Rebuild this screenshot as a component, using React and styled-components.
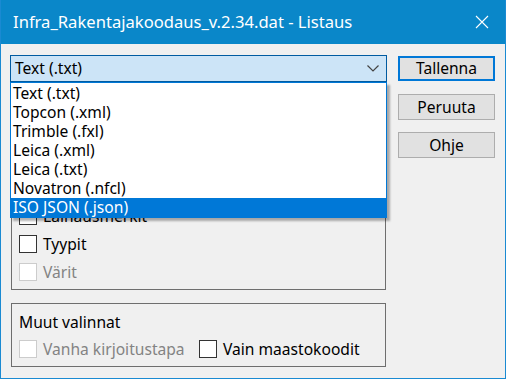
import React from "react";
import styled, { createGlobalStyle } from "styled-components";

const Global = createGlobalStyle`
  html, body { margin: 0; padding: 0; background: #f0f0f0; }
  * { box-sizing: border-box; }
  body { font-family: "Noto Sans", "Open Sans", sans-serif; }
`;

const Window = styled.div`
  width: 506px;
  height: 379px;
  border: 1px solid #1a8ad2;
  border-top: none;
  display: flex;
  flex-direction: column;
  background: #f0f0f0;
`;

const TitleBar = styled.div`
  height: 44px;
  background: #0a87c9;
  display: flex;
  align-items: center;
  justify-content: space-between;
  padding: 0 12px 0 12px;
  color: #fff;
  font-size: 16.6px;
  flex: none;
`;

const Title = styled.span`
  padding-bottom: 2px;
  white-space: nowrap;
`;

const Close = styled.svg`
  width: 14px;
  height: 14px;
  margin-right: 4px;
`;

const Client = styled.div`
  flex: 1;
  display: flex;
  padding: 11px 9px 0 9px;
  font-size: 15.6px;
  color: #000;
`;

const LeftCol = styled.div`
  width: 377px;
  display: flex;
  flex-direction: column;
`;

const RightCol = styled.div`
  margin-left: 11px;
  margin-top: 1px;
  width: 97px;
  display: flex;
  flex-direction: column;
  gap: 12px;
`;

const ComboWrap = styled.div`
  position: relative;
  height: 27px;
`;

const Combo = styled.div`
  height: 27px;
  border: 1px solid #005ba1;
  background: #cce4f7;
  display: flex;
  align-items: center;
  justify-content: space-between;
  padding: 0 7px 1px 4px;
`;

const Chevron = styled.svg`
  width: 12px;
  height: 7px;
`;

const DropList = styled.ul`
  position: absolute;
  top: 27px;
  left: 0;
  width: 377px;
  margin: 0;
  padding: 1px 0 0 0;
  list-style: none;
  background: #fff;
  border: 1px solid #0078d7;
  box-shadow: 3px 3px 2px rgba(0, 0, 0, 0.3);
  z-index: 5;
`;

const Item = styled.li`
  height: 19px;
  line-height: 19px;
  padding-left: 2px;
  padding-bottom: 1px;
  background: ${(p) => (p.$active ? "#0078d7" : "transparent")};
  color: ${(p) => (p.$active ? "#fff" : "#000")};
  white-space: nowrap;
`;

const Group = styled.div`
  margin: ${(p) => p.$top}px 1px 0 1px;
  border: 1px solid #6e6e6e;
  padding: ${(p) => p.$padTop}px 7px 8px 7px;
  display: flex;
  flex-direction: column;
  gap: ${(p) => p.$gap}px;
`;

const GroupLabel = styled.div`
  height: 20px;
  line-height: 20px;
`;

const CheckRow = styled.div`
  display: flex;
`;

const Check = styled.label`
  display: flex;
  align-items: center;
  gap: 6px;
  height: 18px;
  width: ${(p) => (p.$width ? `${p.$width}px` : "auto")};
  color: ${(p) => (p.$disabled ? "#838383" : "#000")};
  white-space: nowrap;
`;

const Box = styled.span`
  width: 18px;
  height: 18px;
  flex: none;
  border: 1px solid ${(p) => (p.$disabled ? "#cccccc" : "#333333")};
  background: #fff;
`;

const Button = styled.div`
  height: ${(p) => (p.$default ? 25 : 26)}px;
  margin-bottom: ${(p) => (p.$default ? 1 : 0)}px;
  background: #e1e1e1;
  border: ${(p) => (p.$default ? "2px solid #0078d7" : "1px solid #adadad")};
  display: flex;
  align-items: center;
  justify-content: center;
  padding-bottom: 1px;
`;

const formats = [
  "Text (.txt)",
  "Topcon (.xml)",
  "Trimble (.fxl)",
  "Leica (.xml)",
  "Leica (.txt)",
  "Novatron (.nfcl)",
  "ISO JSON (.json)",
];

function CheckBox({ label, disabled, width }) {
  return (
    <Check $disabled={disabled} $width={width}>
      <Box $disabled={disabled} />
      {label}
    </Check>
  );
}

export default function App() {
  return (
    <>
      <Global />
      <Window>
        <TitleBar>
          <Title>Infra_Rakentajakoodaus_v.2.34.dat - Listaus</Title>
          <Close viewBox="0 0 14 14">
            <path d="M1 1 L13 13 M13 1 L1 13" stroke="#fff" strokeWidth="1.1" fill="none" />
          </Close>
        </TitleBar>
        <Client>
          <LeftCol>
            <ComboWrap>
              <Combo>
                <span>Text (.txt)</span>
                <Chevron viewBox="0 0 12 7">
                  <path d="M0.5 0.5 L6 6 L11.5 0.5" stroke="#444" strokeWidth="1.2" fill="none" />
                </Chevron>
              </Combo>
              <DropList>
                {formats.map((f, i) => (
                  <Item key={f} $active={i === formats.length - 1}>
                    {f}
                  </Item>
                ))}
              </DropList>
            </ComboWrap>
            <Group $top={10} $padTop={114} $gap={10}>
              <CheckBox label="Lainausmerkit" />
              <CheckBox label="Tyypit" />
              <CheckBox label="Värit" disabled />
            </Group>
            <Group $top={13} $padTop={8} $gap={8}>
              <GroupLabel>Muut valinnat</GroupLabel>
              <CheckRow>
                <CheckBox label="Vanha kirjoitustapa" disabled width={180} />
                <CheckBox label="Vain maastokoodit" />
              </CheckRow>
            </Group>
          </LeftCol>
          <RightCol>
            <Button $default>Tallenna</Button>
            <Button>Peruuta</Button>
            <Button>Ohje</Button>
          </RightCol>
        </Client>
      </Window>
    </>
  );
}
